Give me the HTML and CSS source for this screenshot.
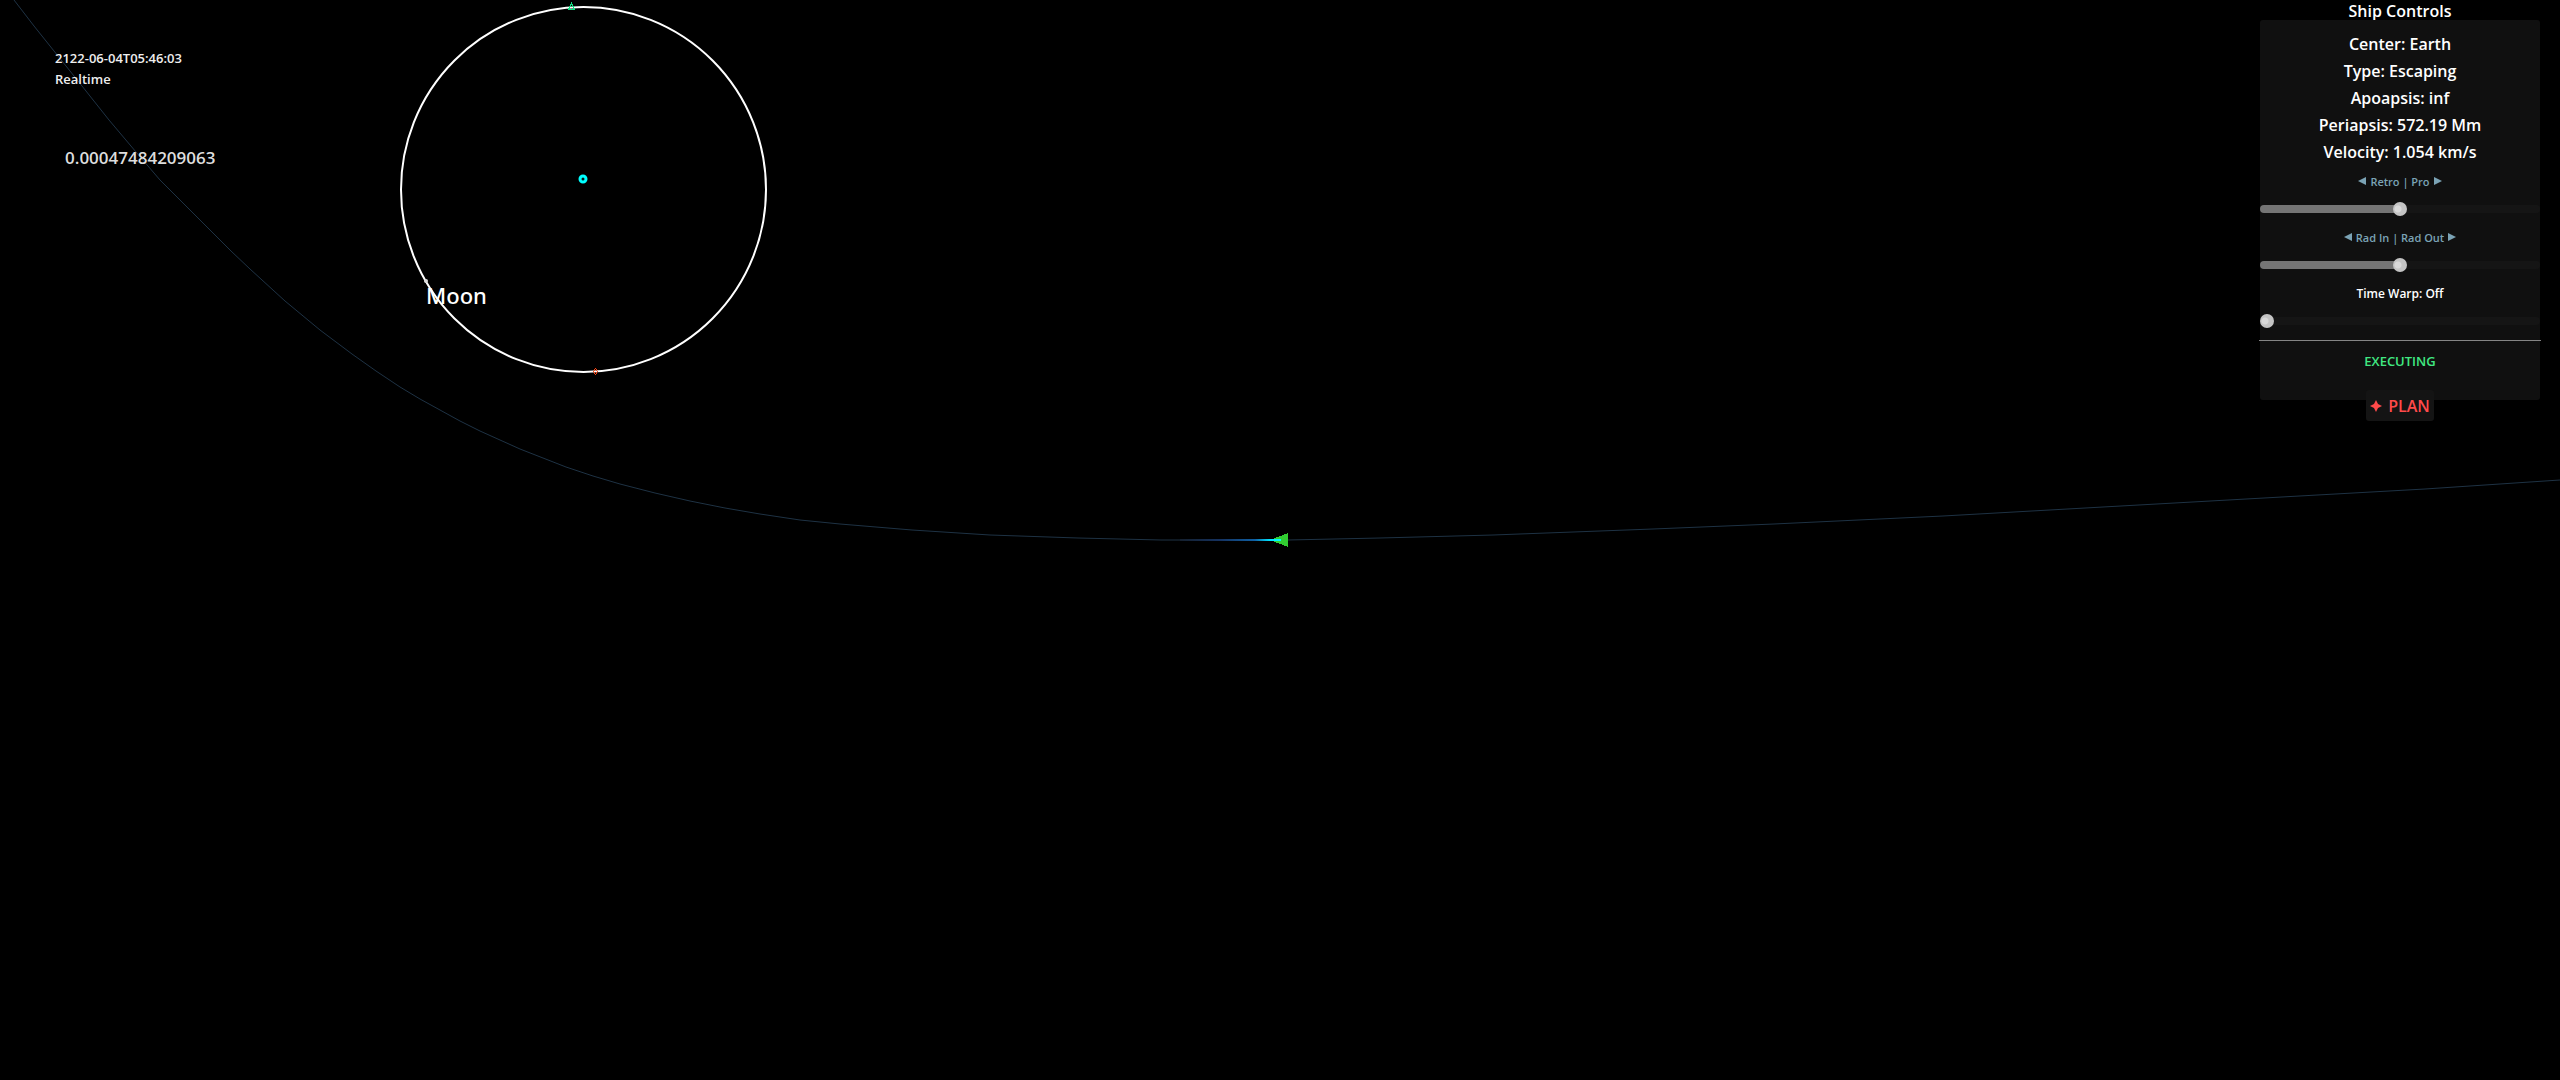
FILE: index.html
```html
<!DOCTYPE html>
<html lang="en">

<head>
    <meta charset="UTF-8">
    <meta name="viewport" content="width=device-width, initial-scale=1.0">
    <title>Ship Controls</title>
    <link rel="stylesheet" href="styles.css">
</head>

<body>
    <!-- orbit map -->
    <svg class="map" viewBox="0 0 2560 1080" preserveAspectRatio="xMidYMin slice">
        <defs>
            <linearGradient id="trail" gradientUnits="userSpaceOnUse" x1="1180" y1="0" x2="1280" y2="0">
                <stop offset="0" stop-color="#15202e" />
                <stop offset="0.4" stop-color="#153260" />
                <stop offset="0.75" stop-color="#0f60a4" />
                <stop offset="0.9" stop-color="#00e6ff" />
                <stop offset="1" stop-color="#00ffff" />
            </linearGradient>
        </defs>
        <polyline class="path" points="14,0 34,26 54,51 82,86 109,120 136,152 160,180 187,207 213,233 231,251 250,269 285,301 320,330 352,354 376,371 400,387 420,399 440,410 460,421 480,431 500,440 520,449 543,458 566,467 593,476 620,484 655,493 690,501 725,508 760,514 800,520 840,524 912,530 990,535 1078,538 1161,540 1288,540 1380,538 1493,535 1653,529 1774,524 1943,516 2103,507 2264,498 2425,489 2560,480" />
        <circle class="orbit" cx="583.5" cy="189.5" r="182.5" />
        <path class="apo" d="M571.5 3.500 L568.5 9.500 H574.500 Z" />
        <path class="peri" d="M595.5 368.500 L597.500 371.500 L595.500 374.500 L593.500 371.500 Z" />
        <circle class="planet" cx="583" cy="179" r="3" />
        <circle class="moon" cx="426" cy="281" r="2" />
        <text class="moon-name" x="426" y="304">Moon</text>
        <path class="ship" d="M1270 540 L1288 533 V547 Z" />
        <rect class="trail" x="1180" y="539" width="101" height="2" />
    </svg>

    <div class="hud">
        <div class="clock">
            <p class="date">2122-06-04T05:46:03</p>
            <p class="date">Realtime</p>
            <p class="ratio">0.00047484209063</p>
        </div>

        <div class="ship-controls">
            <h1>Ship Controls</h1>
            <div class="panel">
                <p>Center: Earth</p>
                <p>Type: Escaping</p>
                <p>Apoapsis: inf</p>
                <p>Periapsis: 572.19 Mm</p>
                <p>Velocity: 1.054 km/s</p>
                <label class="thrust" for="pro">
                    <svg class="arrow" viewBox="0 0 8 8"><path d="M8 0 V8 L0 4 Z" /></svg>
                    Retro | Pro
                    <svg class="arrow" viewBox="0 0 8 8"><path d="M0 0 V8 L8 4 Z" /></svg>
                </label>
                <input type="range" class="half" id="pro" min="-100" max="100" value="0">
                <label class="thrust" for="rad">
                    <svg class="arrow" viewBox="0 0 8 8"><path d="M8 0 V8 L0 4 Z" /></svg>
                    Rad In | Rad Out
                    <svg class="arrow" viewBox="0 0 8 8"><path d="M0 0 V8 L8 4 Z" /></svg>
                </label>
                <input type="range" class="half" id="rad" min="-100" max="100" value="0">
                <label class="warp" for="warp">Time Warp: Off</label>
                <input type="range" id="warp" min="0" max="10" value="0">
                <hr>
                <p class="status">EXECUTING</p>
            </div>
            <button type="button" class="plan">
                <svg class="star" viewBox="0 0 12 12"><path d="M6 0 L8 4 L12 6 L8 8 L6 12 L4 8 L0 6 L4 4 Z" /></svg>
                PLAN
            </button>
        </div>
    </div>
</body>

</html>
```

FILE: styles.css
```css
* {
    margin: 0;
    padding: 0;
    box-sizing: border-box;
}

body {
    min-height: 100vh;
    background-color: #000;
    color: #fff;
    font: 600 16px/23px "Open Sans", "Noto Sans", sans-serif;
    overflow: hidden;
}

/* map */
.map {
    position: absolute;
    left: 0;
    top: 0;
    width: 100%;
    height: 100%;
}

.path {
    fill: none;
    stroke: #1e3244;
    stroke-width: 1;
}

.orbit {
    fill: none;
    stroke: #fff;
    stroke-width: 2;
}

.apo,
.peri {
    fill: none;
    stroke: #14dc82;
    stroke-width: 1;
    shape-rendering: crispEdges;
}

.peri {
    stroke: #ff4614;
}

.planet {
    fill: #0a1414;
    stroke: #00ffff;
    stroke-width: 3;
}

.moon {
    fill: #ddd;
}

.moon-name {
    fill: #fff;
    font: 500 22px "Noto Sans", sans-serif;
}

.ship {
    fill: #32cd32;
    shape-rendering: crispEdges;
}

.trail {
    fill: url(#trail);
}

/* overlay */
.hud {
    position: relative;
    display: flex;
    justify-content: space-between;
    align-items: flex-start;
    padding: 0 20px 0 55px;
}

.clock {
    padding-top: 48px;
    color: #eee;
}

.date {
    font-size: 13px;
    line-height: 21px;
}

.ratio {
    padding: 56px 0 0 10px;
    color: #ddd;
    font-size: 17px;
}

.ship-controls {
    display: flex;
    flex-direction: column;
    align-items: center;
    width: 280px;
    text-align: center;
}

.ship-controls h1 {
    height: 20px;
    font-size: 16px;
    font-weight: 600;
    line-height: 22px;
}

.panel {
    display: flex;
    flex-direction: column;
    gap: 4px;
    width: 100%;
    height: 380px;
    padding-top: 13px;
    border-radius: 3px;
    background-color: #101010;
}

.thrust,
.warp {
    display: flex;
    justify-content: center;
    align-items: center;
    gap: 4px;
    height: 26px;
    color: #7ba3b5;
    font-size: 11px;
}

.warp {
    color: #fff;
    font-size: 12px;
}

.arrow {
    width: 8px;
    height: 8px;
    fill: currentColor;
}

input[type="range"] {
    appearance: none;
    width: 100%;
    height: 22px;
    background: none;
    cursor: pointer;
}

input[type="range"]::-webkit-slider-runnable-track {
    height: 8px;
    border-radius: 4px;
    background-color: #151515;
}

input.half::-webkit-slider-runnable-track {
    background: linear-gradient(90deg, #757575 50%, #151515 50%);
}

input[type="range"]::-webkit-slider-thumb {
    appearance: none;
    width: 14px;
    height: 14px;
    margin-top: -3px;
    border-radius: 50%;
    background: radial-gradient(circle at 5px 7px, #d9d9d9 3px, #c4c4c4 4px);
}

hr {
    width: 282px;
    margin: 4px -1px;
    border: 0;
    border-top: 1px solid #858585;
}

.status {
    padding-top: 1px;
    color: #40e882;
    font-size: 13px;
}

.plan {
    display: flex;
    align-items: center;
    gap: 6px;
    height: 31px;
    margin-top: -10px;
    padding: 1px 4px 0;
    border: 0;
    border-radius: 3px;
    background-color: #141414;
    color: #ff4a4a;
    font: inherit;
    cursor: pointer;
}

.star {
    width: 12px;
    height: 12px;
    fill: currentColor;
}
```
